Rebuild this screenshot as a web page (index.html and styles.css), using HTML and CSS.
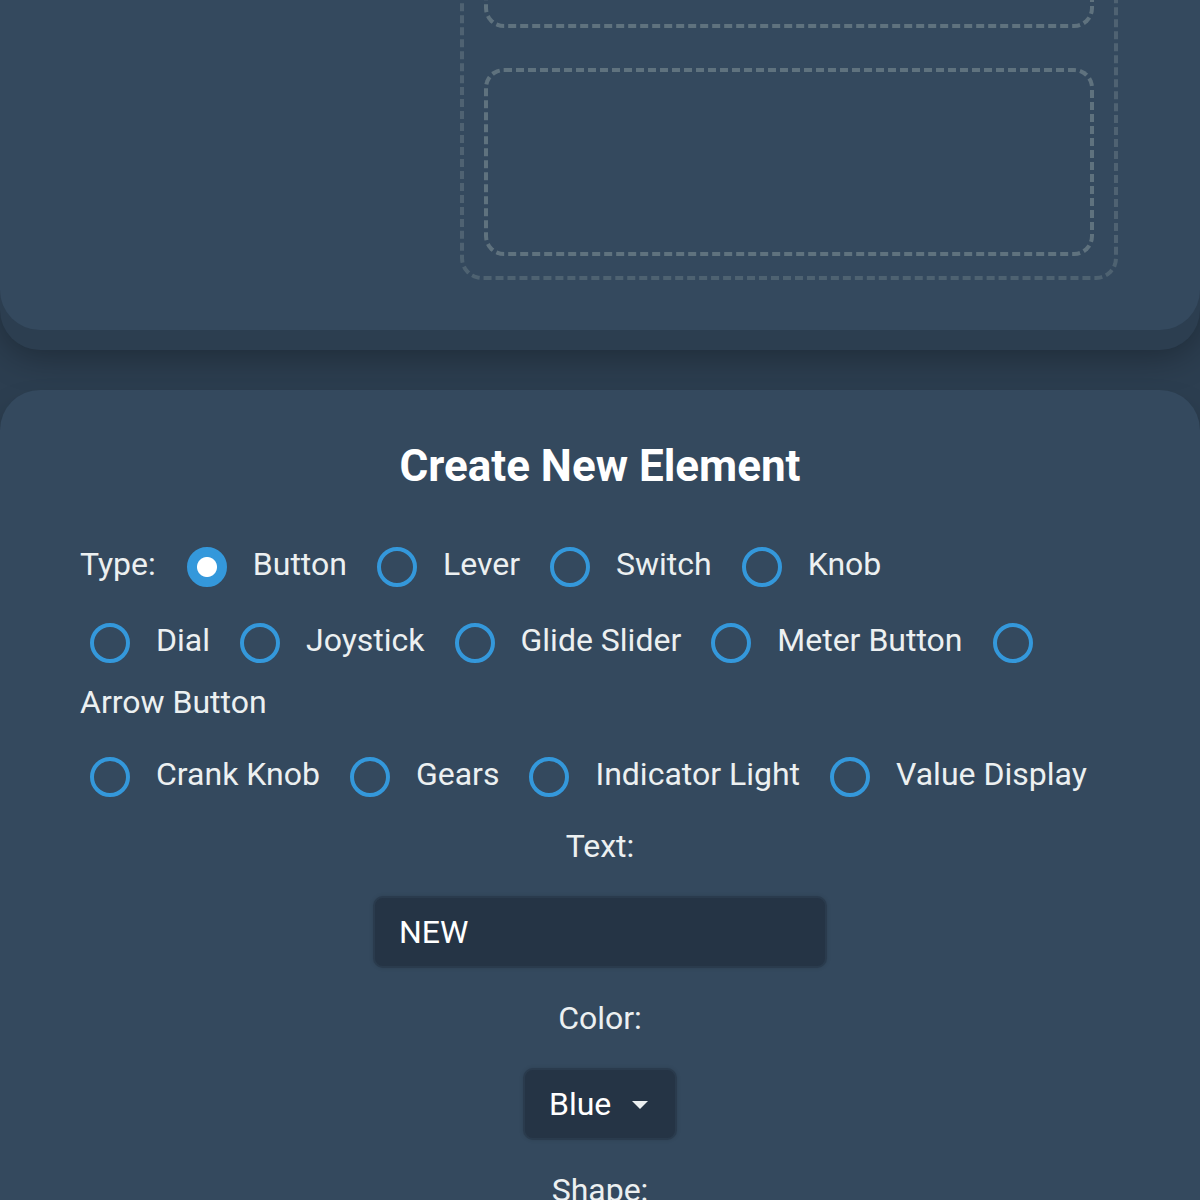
FILE: index.html
```html
<!DOCTYPE html>
<html lang="en">
<head>
<meta charset="utf-8">
<title>Control Panel Builder</title>
<link rel="stylesheet" href="styles.css">
</head>
<body>
<div class="page">
  <section class="card workspace">
    <div class="palette"></div>
    <div class="dropzone">
      <div class="slot"></div>
      <div class="slot"></div>
    </div>
  </section>

  <section class="card editor">
    <h2 class="editor-title">Create New Element</h2>

    <div class="radio-line line-first"><span class="type-label">Type:</span><label class="choice"><input type="radio" name="type" class="radio" checked><span class="opt">Button</span></label><label class="choice"><input type="radio" name="type" class="radio"><span class="opt">Lever</span></label><label class="choice"><input type="radio" name="type" class="radio"><span class="opt">Switch</span></label><label class="choice"><input type="radio" name="type" class="radio"><span class="opt">Knob</span></label></div>

    <div class="radio-line line-second"><label class="choice"><input type="radio" name="type" class="radio"><span class="opt">Dial</span></label><label class="choice"><input type="radio" name="type" class="radio"><span class="opt">Joystick</span></label><label class="choice"><input type="radio" name="type" class="radio"><span class="opt">Glide Slider</span></label><label class="choice"><input type="radio" name="type" class="radio"><span class="opt">Meter Button</span></label><label class="choice"><input type="radio" name="type" class="radio"><span class="opt">Arrow Button</span></label></div>

    <div class="radio-line line-third"><label class="choice"><input type="radio" name="type" class="radio"><span class="opt">Crank Knob</span></label><label class="choice"><input type="radio" name="type" class="radio"><span class="opt">Gears</span></label><label class="choice"><input type="radio" name="type" class="radio"><span class="opt">Indicator Light</span></label><label class="choice"><input type="radio" name="type" class="radio"><span class="opt">Value Display</span></label></div>

    <div class="field field-text">
      <label class="field-label" for="elText">Text:</label>
      <input id="elText" class="text-input" type="text" value="NEW">
    </div>

    <div class="field">
      <label class="field-label" for="elColor">Color:</label>
      <div class="select-wrap">
        <select id="elColor" class="select">
          <option selected>Blue</option>
          <option>Red</option>
          <option>Green</option>
          <option>Yellow</option>
        </select>
      </div>
    </div>

    <div class="field">
      <span class="field-label">Shape:</span>
      <div class="radio-line centered"><label class="choice"><input type="radio" name="shape" class="radio" checked><span class="opt">Round</span></label><label class="choice"><input type="radio" name="shape" class="radio"><span class="opt">Square</span></label></div>
    </div>
  </section>
</div>
</body>
</html>
```

FILE: styles.css
```css
* {
  box-sizing: border-box;
}

html,
body {
  margin: 0;
  padding: 0;
}

body {
  background: #2c3e50;
  font-family: Roboto, "Liberation Sans", sans-serif;
  color: #ecf0f1;
}

.page {
  display: flex;
  flex-direction: column;
  gap: 60px;
  padding-bottom: 80px;
}

.card {
  background: #34495e;
  border-radius: 40px;
  box-shadow: 0 20px 0 #2c3e50, 0 26px 36px rgba(0, 0, 0, 0.32);
}

/* ---------- workspace (top card, scrolled partly out of view) ---------- */
.workspace {
  margin-top: -224px;
  display: grid;
  grid-template-columns: 1fr 658px;
  gap: 20px;
  padding: 40px 82px 50px 80px;
}

.dropzone {
  border: 4px dashed rgba(149, 165, 166, 0.28);
  border-radius: 22px;
  padding: 20px;
  display: flex;
  flex-direction: column;
  gap: 40px;
}

.slot {
  height: 188px;
  border: 4px dashed rgba(149, 165, 166, 0.45);
  border-radius: 20px;
}

/* ---------- editor card ---------- */
.editor {
  padding: 53px 80px 80px;
}

.editor-title {
  margin: 0 0 44px;
  font-size: 44px;
  line-height: 46px;
  font-weight: 700;
  text-align: center;
  color: #ffffff;
}

.radio-line {
  font-size: 32px;
  line-height: 62px;
  color: #ecf0f1;
}

.line-first {
  margin-bottom: 14px;
}

.line-second {
  margin-bottom: 10px;
}

.type-label {
  margin-right: 21px;
}

.choice {
  cursor: pointer;
}

.opt {
  white-space: nowrap;
  margin-right: 20px;
}

.radio {
  -webkit-appearance: none;
  appearance: none;
  display: inline-block;
  width: 40px;
  height: 40px;
  margin: 0 26px 0 10px;
  border: 4px solid #3498db;
  border-radius: 50%;
  background: transparent;
  vertical-align: middle;
  cursor: pointer;
}

.radio:checked {
  background: radial-gradient(circle, #ffffff 0, #ffffff 9.5px, #3498db 10.5px);
}

.field {
  text-align: center;
}

.field-text {
  margin-top: 17px;
}

.field-label {
  display: block;
  font-size: 32px;
  line-height: 48px;
  margin: 0 0 26px;
  color: #ecf0f1;
}

.text-input {
  display: block;
  width: 454px;
  height: 72px;
  margin: 0 auto 26px;
  padding: 0 24px;
  font-family: Roboto, "Liberation Sans", sans-serif;
  font-size: 32px;
  color: #ffffff;
  background: #253445;
  border: 2px solid #2a3b4d;
  border-radius: 10px;
  box-shadow: 0 0 4px rgba(0, 0, 0, 0.12);
  outline: none;
}

.select-wrap {
  position: relative;
  width: 154px;
  margin: 0 auto 26px;
}

.select {
  -webkit-appearance: none;
  appearance: none;
  display: block;
  width: 100%;
  height: 72px;
  padding: 0 60px 0 24px;
  font-family: Roboto, "Liberation Sans", sans-serif;
  font-size: 32px;
  color: #ffffff;
  background: #253445;
  border: 2px solid #2a3b4d;
  border-radius: 10px;
  box-shadow: 0 0 4px rgba(0, 0, 0, 0.12);
  outline: none;
}

.select-wrap::after {
  content: "";
  position: absolute;
  left: 109px;
  top: 33px;
  border-left: 8px solid transparent;
  border-right: 8px solid transparent;
  border-top: 8px solid #ecf0f1;
  pointer-events: none;
}

.centered {
  text-align: center;
}
```
